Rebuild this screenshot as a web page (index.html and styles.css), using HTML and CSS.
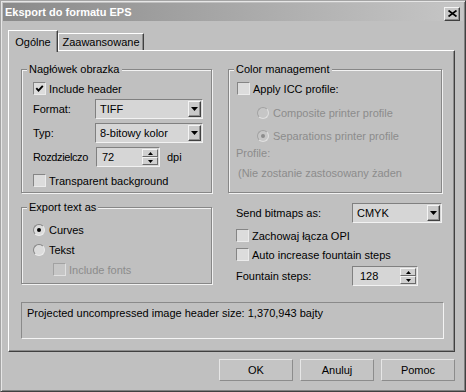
FILE: index.html
```html
<!DOCTYPE html>
<html>
<head>
  <meta charset="utf-8">
  <title>Eksport do formatu EPS</title>
  <link rel="stylesheet" href="styles.css">
</head>
<body>
  <div class="dialog">
    <!-- Title bar -->
    <div class="titlebar">
      <span class="title">Eksport do formatu EPS</span>
      <span class="close">
        <svg width="9" height="7" viewBox="0 0 9 7"><path d="M0.5 0.5L8.5 6.5M8.5 0.5L0.5 6.5"/></svg>
      </span>
    </div>

    <div class="body">
      <!-- Tabs -->
      <div class="tabs">
        <div class="tab tab-active">Ogólne</div>
        <div class="tab tab-wide">Zaawansowane</div>
      </div>

      <div class="panel">
        <!-- Header group -->
        <fieldset class="group group-header">
          <legend>Nagłówek obrazka</legend>
          <div class="check">
            <span class="box"><svg width="9" height="9" viewBox="0 0 9 9"><path d="M1.3 4.2L3.5 6.6L7.8 1.8"/></svg></span>
            Include header
          </div>
          <div class="field">
            <span class="field-label">Format:</span>
            <div class="select select-header"><span>TIFF</span><span class="drop"><svg width="7" height="4" viewBox="0 0 7 4"><polygon points="0,0 7,0 3.5,4"/></svg></span></div>
          </div>
          <div class="field">
            <span class="field-label">Typ:</span>
            <div class="select select-header"><span>8-bitowy kolor</span><span class="drop"><svg width="7" height="4" viewBox="0 0 7 4"><polygon points="0,0 7,0 3.5,4"/></svg></span></div>
          </div>
          <div class="field">
            <span class="field-label label-narrow">Rozdzielczo</span>
            <div class="spin spin-dpi">
              <span>72</span>
              <span class="spin-btns">
                <span class="spin-btn"><svg width="5" height="3" viewBox="0 0 5 3"><polygon points="2.5,0 5,3 0,3"/></svg></span>
                <span class="spin-btn"><svg width="5" height="3" viewBox="0 0 5 3"><polygon points="0,0 5,0 2.5,3"/></svg></span>
              </span>
            </div>
            <span class="unit">dpi</span>
          </div>
          <div class="check check-last">
            <span class="box"></span>
            Transparent background
          </div>
        </fieldset>

        <!-- Color management group -->
        <fieldset class="group group-color">
          <legend>Color management</legend>
          <div class="check">
            <span class="box"></span>
            Apply ICC profile:
          </div>
          <div class="option indent disabled opt-composite">
            <span class="radio"></span>
            Composite printer profile
          </div>
          <div class="option indent disabled opt-separations">
            <span class="radio on"></span>
            Separations printer profile
          </div>
          <div class="note disabled note-profile">Profile:</div>
          <div class="note disabled note-none">(Nie zostanie zastosowany żaden</div>
        </fieldset>

        <!-- Export text group -->
        <fieldset class="group group-text">
          <legend>Export text as</legend>
          <div class="option">
            <span class="radio on"></span>
            Curves
          </div>
          <div class="option opt-next">
            <span class="radio"></span>
            Tekst
          </div>
          <div class="check indent disabled opt-next">
            <span class="box"></span>
            Include fonts
          </div>
        </fieldset>

        <!-- Bitmap options -->
        <div class="side">
          <div class="field field-bitmaps">
            <span class="field-label side-label">Send bitmaps as:</span>
            <div class="select select-side"><span>CMYK</span><span class="drop"><svg width="7" height="4" viewBox="0 0 7 4"><polygon points="0,0 7,0 3.5,4"/></svg></span></div>
          </div>
          <div class="check side-check">
            <span class="box"></span>
            Zachowaj łącza OPI
          </div>
          <div class="check side-check">
            <span class="box"></span>
            Auto increase fountain steps
          </div>
          <div class="field field-steps">
            <span class="field-label side-label">Fountain steps:</span>
            <div class="spin spin-steps">
              <span>128</span>
              <span class="spin-btns">
                <span class="spin-btn"><svg width="5" height="3" viewBox="0 0 5 3"><polygon points="2.5,0 5,3 0,3"/></svg></span>
                <span class="spin-btn"><svg width="5" height="3" viewBox="0 0 5 3"><polygon points="0,0 5,0 2.5,3"/></svg></span>
              </span>
            </div>
          </div>
        </div>

        <!-- Size info -->
        <div class="info">Projected uncompressed image header size: 1,370,943 bajty</div>
      </div>

      <!-- Dialog buttons -->
      <div class="buttons">
        <button class="btn">OK</button>
        <button class="btn">Anuluj</button>
        <button class="btn">Pomoc</button>
      </div>
    </div>
  </div>
</body>
</html>
```

FILE: styles.css
```css
/* Base */
* {
  box-sizing: border-box;
}

body {
  margin: 0;
  font-family: "Liberation Sans", Arial, sans-serif;
  font-size: 11px;
  color: #000;
  background: #c0c0c0;
}

/* Dialog frame */
.dialog {
  width: 466px;
  height: 392px;
  display: flex;
  flex-direction: column;
  padding: 2px;
  background: #c0c0c0;
  border: 1px solid;
  border-color: #a4a4a4 #404040 #404040 #a4a4a4;
  box-shadow: inset 1px 1px #e6e6e6, inset -1px -1px #808080;
}

.titlebar {
  height: 18px;
  display: flex;
  align-items: center;
  justify-content: space-between;
  padding: 0 3px 0 2px;
  background: linear-gradient(to right, #8a8a8a, #c6c6c6);
}

.title {
  color: #fff;
  font-weight: bold;
}

.close {
  width: 16px;
  height: 14px;
  margin-top: 3px;
  display: flex;
  align-items: center;
  justify-content: center;
  background: #c8c8c8;
  border: 1px solid;
  border-color: #f4f4f4 #404040 #404040 #f4f4f4;
  box-shadow: inset -1px -1px #8c8c8c;
}

.close svg {
  stroke: #000;
  stroke-width: 1.7;
  fill: none;
}

.body {
  flex: 1;
  padding: 9px 8px 0 5px;
}

/* Tabs */
.tabs {
  height: 20px;
  display: flex;
  align-items: flex-end;
}

.tab {
  width: 86px;
  height: 17px;
  display: flex;
  align-items: center;
  justify-content: center;
  border: 1px solid;
  border-bottom: none;
  border-color: #fff #404040 transparent #fff;
  box-shadow: inset -1px 0 #8c8c8c;
}

.tab-active {
  position: relative;
  z-index: 1;
  width: 50px;
  height: 22px;
  margin-bottom: -2px;
  background: #c0c0c0;
}

/* Tab panel */
.panel {
  height: 302px;
  display: grid;
  grid-template-columns: 191px 216px;
  column-gap: 16px;
  row-gap: 7px;
  align-items: start;
  align-content: start;
  padding: 11px 10px 0 12px;
  border: 1px solid;
  border-color: #fff #404040 #404040 #fff;
  box-shadow: inset -1px -1px #8c8c8c;
}

/* Group boxes */
.group {
  margin: 0;
  min-width: 0;
  padding: 6px 0 0 11px;
  border: 1px solid #878787;
  box-shadow: inset 1px 1px #f2f2f2, 1px 1px #f2f2f2;
}

.group legend {
  padding: 0 2px;
  margin-left: -6px;
  line-height: 14px;
  background: #c0c0c0;
}

.group-header {
  padding-bottom: 5px;
}

.group-color {
  margin-right: 2px;
  padding-left: 8px;
  padding-bottom: 12px;
}

.group-color legend {
  margin-left: -3px;
}

.group-text {
  padding-top: 9px;
  padding-bottom: 7px;
}

/* Checkboxes and radios */
.check,
.option {
  height: 13px;
  display: flex;
  align-items: center;
  gap: 3px;
  white-space: nowrap;
}

.box {
  width: 13px;
  height: 13px;
  flex: none;
  display: flex;
  align-items: center;
  justify-content: center;
  background: #dcdcdc;
  border: 1px solid;
  border-color: #858585 #ebebeb #ebebeb #858585;
}

.box svg {
  stroke: #000;
  stroke-width: 1.9;
  fill: none;
}

.radio {
  width: 12px;
  height: 12px;
  flex: none;
  margin-right: 1px;
  display: flex;
  align-items: center;
  justify-content: center;
  border-radius: 50%;
  background: #dcdcdc;
  border: 1px solid;
  border-color: #858585 #ebebeb #ebebeb #858585;
}

.radio.on::after {
  content: "";
  width: 4px;
  height: 4px;
  border-radius: 50%;
  background: #000;
}

.indent {
  margin-left: 20px;
}

.disabled {
  color: #8c8c8c;
}

.disabled .box,
.disabled .radio {
  background: #c6c6c6;
  border-color: #a2a2a2 #e0e0e0 #e0e0e0 #a2a2a2;
}

.disabled .radio.on::after {
  background: #8c8c8c;
}

.check-last {
  margin-top: 7px;
}

.opt-composite {
  margin-top: 11px;
}

.opt-separations {
  margin-top: 10px;
}

.opt-next {
  margin-top: 7px;
}

.note {
  line-height: 14px;
  white-space: nowrap;
}

.note-profile {
  margin-top: 4px;
  margin-left: -1px;
}

.note-none {
  margin-top: 6px;
  margin-left: 1px;
}

/* Labelled fields */
.field {
  display: flex;
  align-items: center;
  margin-top: 4px;
}

.field-label {
  width: 62px;
  flex: none;
  white-space: nowrap;
}

.label-narrow {
  letter-spacing: -0.4px;
}

.select,
.spin {
  height: 20px;
  display: flex;
  align-items: center;
  justify-content: space-between;
  padding: 0 1px 0 4px;
  background: #d6d6d6;
  border: 1px solid;
  border-color: #808080 #f2f2f2 #f2f2f2 #808080;
  white-space: nowrap;
}

.select-header {
  width: 108px;
}

.drop {
  width: 13px;
  height: 16px;
  display: flex;
  align-items: center;
  justify-content: center;
  background: #cacaca;
  border: 1px solid;
  border-color: #f4f4f4 #404040 #404040 #f4f4f4;
  box-shadow: inset -1px -1px #909090;
}

.drop svg,
.spin-btn svg {
  fill: #000;
}

.spin {
  padding-left: 5px;
}

.spin-dpi {
  width: 64px;
  margin-left: 1px;
}

.spin-btns {
  width: 16px;
  height: 16px;
  display: flex;
  flex-direction: column;
}

.spin-btn {
  flex: 1;
  display: flex;
  align-items: center;
  justify-content: center;
  background: #d0d0d0;
  border: 1px solid;
  border-color: #f4f4f4 #6a6a6a #6a6a6a #f4f4f4;
}

.unit {
  margin-left: 7px;
}

/* Right hand options */
.side {
  padding-left: 8px;
}

.side-label {
  width: 116px;
}

.field-bitmaps {
  margin-top: 3px;
}

.select-side {
  width: 90px;
}

.side-check {
  margin-top: 6px;
}

.field-steps {
  margin-top: 5px;
}

.spin-steps {
  width: 66px;
  padding-left: 7px;
}

/* Info box */
.info {
  grid-column: 1 / -1;
  height: 37px;
  margin-top: 9px;
  padding: 3px 5px;
  line-height: 14px;
  border: 1px solid;
  border-color: #8a8a8a #f4f4f4 #f4f4f4 #8a8a8a;
}

/* Buttons */
.buttons {
  display: flex;
  justify-content: flex-end;
  gap: 7px;
  margin-top: 7px;
}

.btn {
  width: 74px;
  height: 22px;
  padding: 0;
  font: inherit;
  color: #000;
  background: #c4c4c4;
  border: 1px solid;
  border-color: #e6e6e6 #8c8c8c #8c8c8c #e6e6e6;
}
```
